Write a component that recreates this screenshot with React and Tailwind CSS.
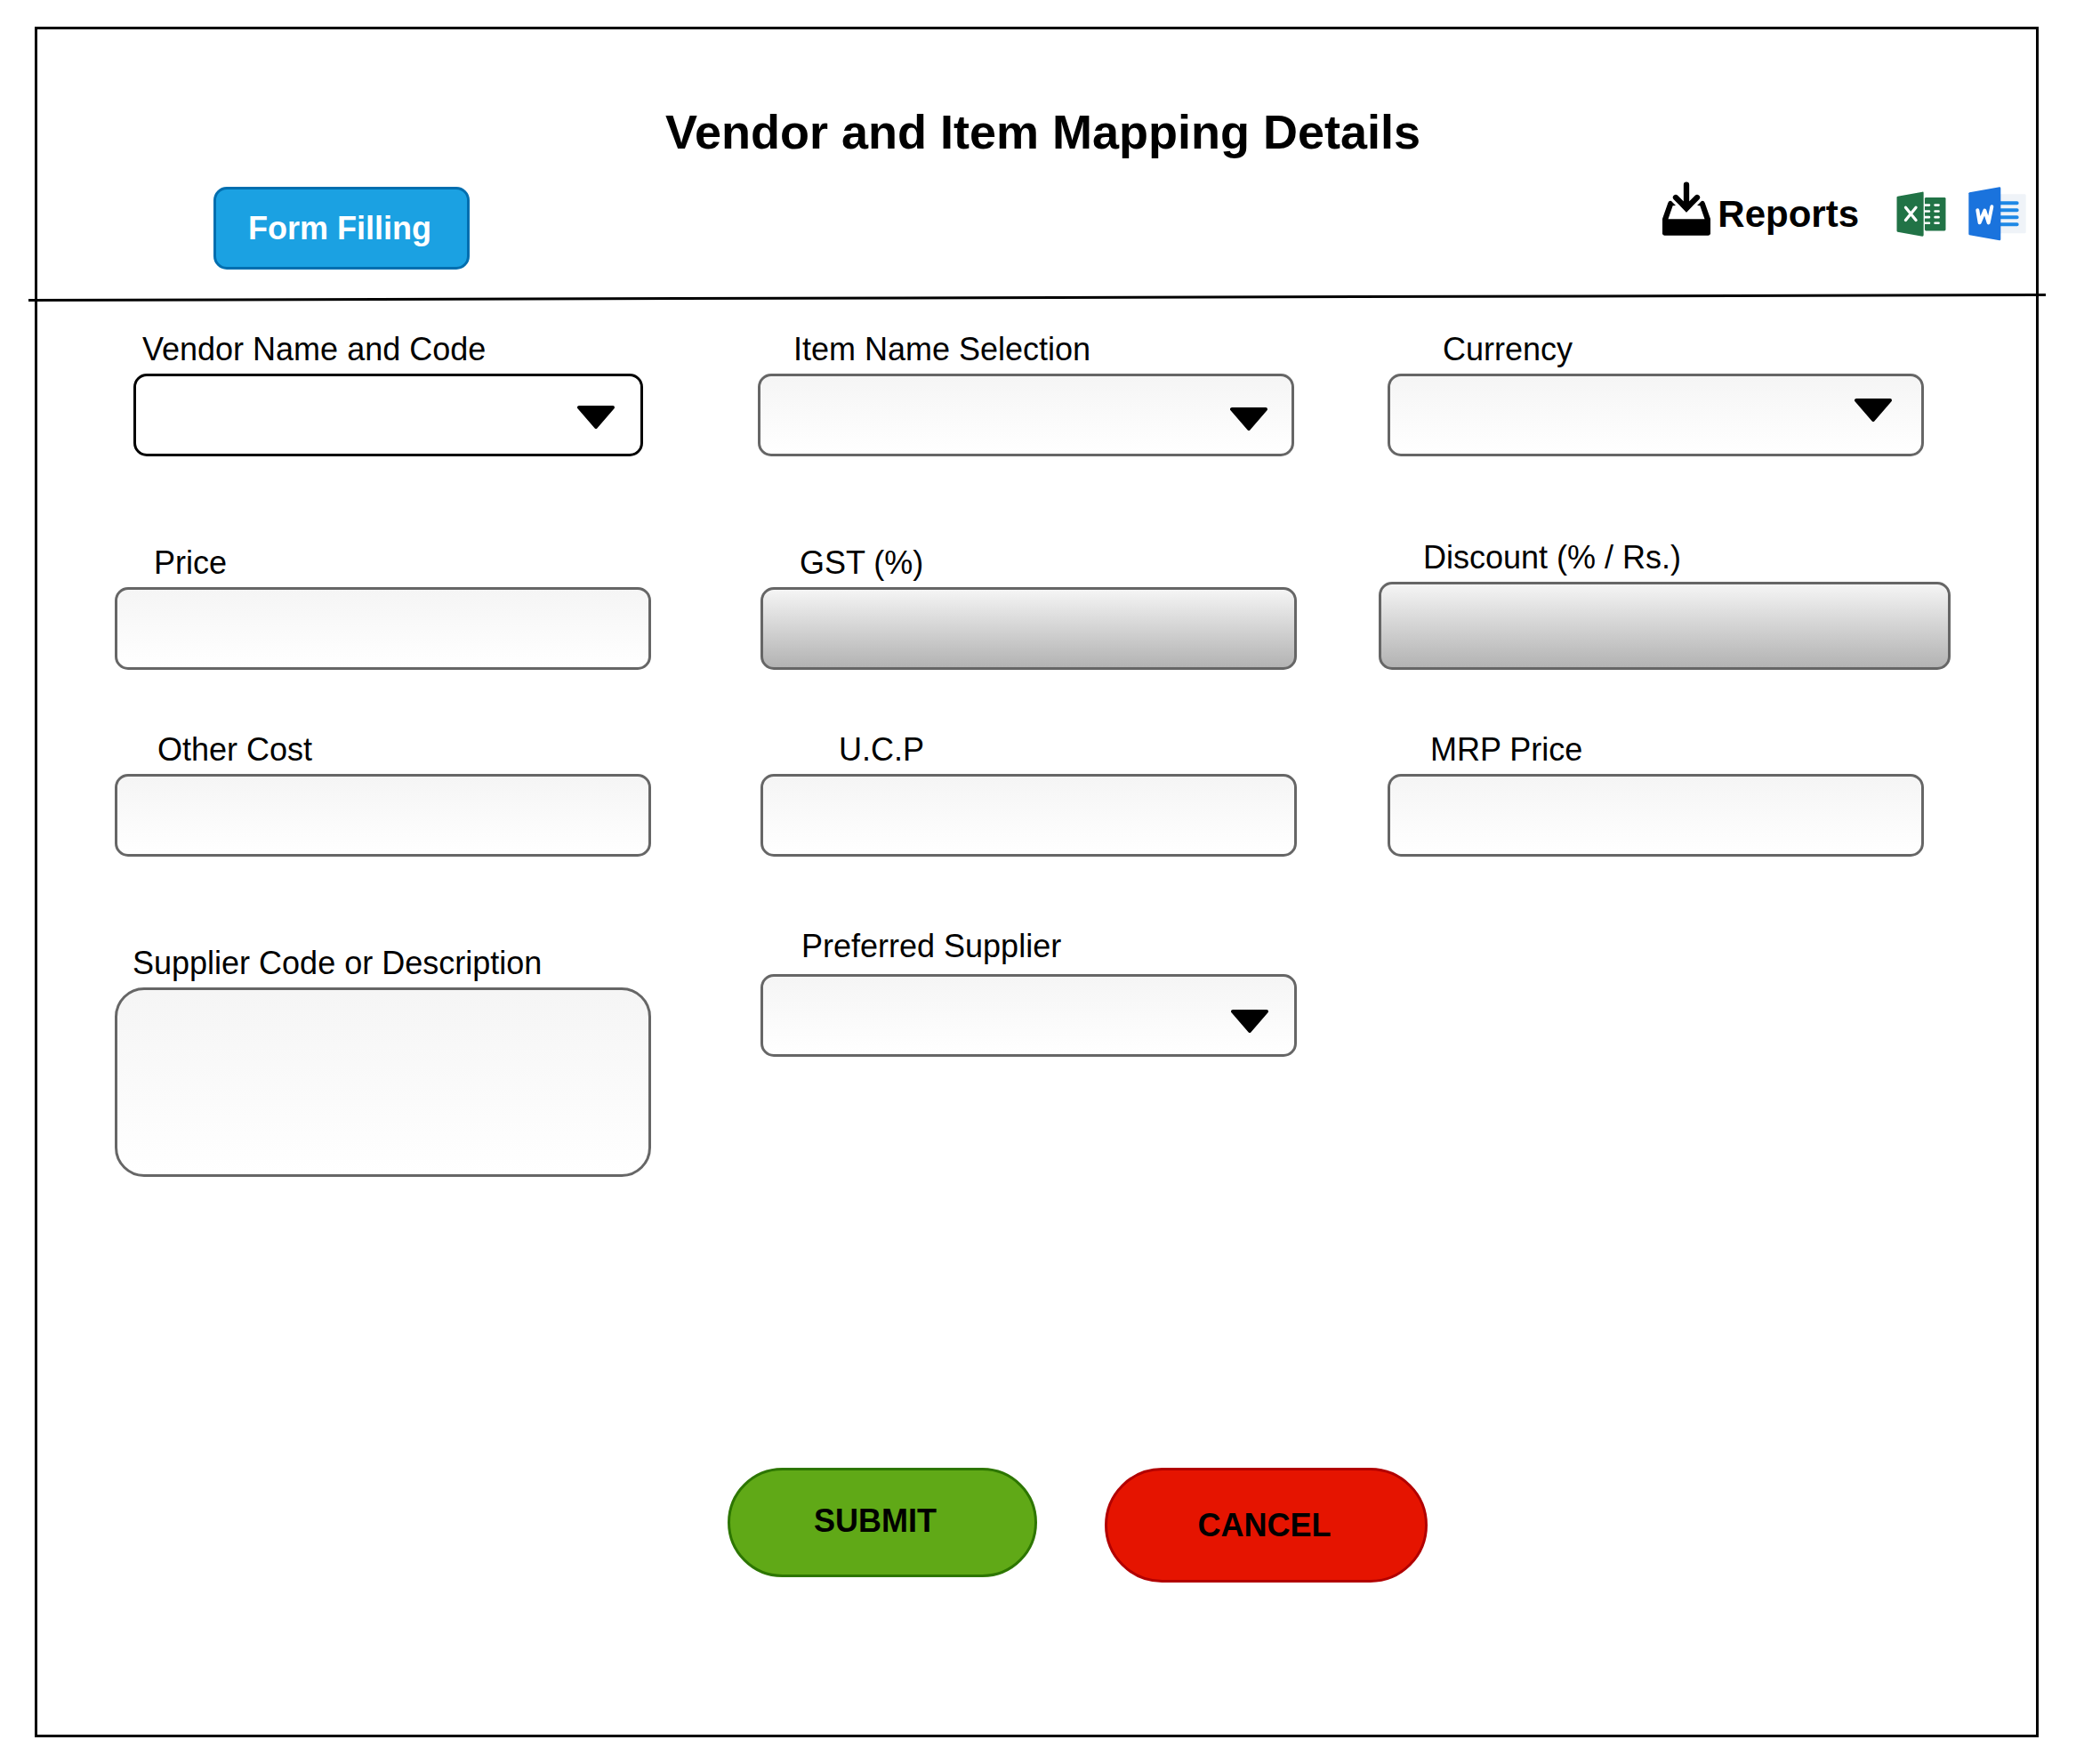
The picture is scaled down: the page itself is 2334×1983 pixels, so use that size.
import React from "react";

const LIGHT = "border-[#666666] bg-linear-to-b from-[#f5f5f5] to-white";
const SHADED = "border-[#666666] bg-linear-to-b from-[#f5f5f5] to-[#b3b3b3]";

function Label({ id, indent, gap = "mb-1.5", children }) {
  return (
    <label htmlFor={id} className={`block text-4xl leading-[42px] ${gap} ${indent}`}>
      {children}
    </label>
  );
}

function TextField({ id, label, indent, cell, tone = LIGHT, height = "h-[93px]" }) {
  return (
    <div className={cell}>
      <Label id={id} indent={indent}>{label}</Label>
      <input
        id={id}
        type="text"
        className={`block w-full rounded-[15px] border-3 px-6 text-4xl ${height} ${tone}`}
      />
    </div>
  );
}

function SelectField({ id, label, indent, cell, arrow, gap, tone = LIGHT }) {
  return (
    <div className={cell}>
      <Label id={id} indent={indent} gap={gap}>{label}</Label>
      <div className="relative">
        <select
          id={id}
          className={`block h-[93px] w-full appearance-none rounded-[15px] border-3 px-6 text-4xl ${tone}`}
        />
        <svg
          viewBox="0 0 42 26"
          className={`pointer-events-none absolute h-[26px] w-[42px] ${arrow}`}
          aria-hidden="true"
        >
          <path d="M2 2H40L21 24Z" stroke="#000" strokeWidth="4" strokeLinejoin="round" />
        </svg>
      </div>
    </div>
  );
}

function DownloadIcon() {
  return (
    <svg viewBox="0 0 162 183" className="mb-3 h-[61px] w-[54px]" aria-hidden="true">
      <rect x="0" y="127" width="162" height="55" rx="7" />
      <path d="M0 134V126L19 72Q22 64 30 66L45 81L35 82L19 128V134Z" />
      <path d="M162 134V126L143 72Q140 64 132 66L117 81L127 82L143 128V134Z" />
      <path
        d="M81 11V88M45 54L81 90L117 54"
        fill="none"
        stroke="#000"
        strokeWidth="19"
        strokeLinecap="round"
      />
      <path d="M60 82H102L81 104Z" />
    </svg>
  );
}

function ExcelIcon() {
  return (
    <svg viewBox="0 0 168 154" className="h-[51px] w-14" aria-hidden="true">
      <rect x="96" y="21" width="71" height="113" rx="4" fill="#217346" />
      <path
        d="M96 47H111M96 68H111M96 88H111M96 108H111M131 47H143M131 68H143M131 88H143M131 108H143"
        stroke="#fff"
        strokeWidth="8"
        strokeLinecap="round"
      />
      <path d="M4 17L88 2Q92 1 92 5V149Q92 153 88 153L4 138Q1 137 1 134V20Q1 18 4 17Z" fill="#217346" />
      <path d="M31 55L66 98M66 55L31 98" stroke="#fff" strokeWidth="10" strokeLinecap="round" />
    </svg>
  );
}

function WordIcon() {
  return (
    <svg viewBox="0 0 195 183" className="h-[61px] w-[65px]" aria-hidden="true">
      <rect x="105" y="25" width="89" height="132" rx="4" fill="#eff3f8" />
      <path
        d="M105 55H164M105 79H164M105 103H164M105 127H164"
        stroke="#1e88e5"
        strokeWidth="12"
        strokeLinecap="round"
      />
      <path d="M4 19L105 1Q109 1 109 5V177Q109 181 105 181L4 163Q1 162 1 159V22Q1 20 4 19Z" fill="#1a73dd" />
      <path
        d="M31 79L38 121L55 80L68 121L79 67"
        fill="none"
        stroke="#fff"
        strokeWidth="12"
        strokeLinecap="round"
        strokeLinejoin="round"
      />
    </svg>
  );
}

export default function App() {
  return (
    <div className="flex min-h-screen flex-col bg-white pt-[30px] pr-[42px] pb-[30px] pl-[39px] font-['Liberation_Sans',Arial,sans-serif] text-black">
      <main className="flex-1 border-3 border-black">
        <header>
          <h1 className="pt-[85px] pl-3.5 text-center text-[54px] leading-[60px] font-bold">
            Vendor and Item Mapping Details
          </h1>
          <div className="mt-[26px] flex items-start justify-between pr-[11px] pl-[198px]">
            <button
              type="button"
              className="mt-1.5 h-[93px] w-72 rounded-[15px] border-3 border-[#006eaf] bg-[#1ba1e2] pr-1 text-4xl leading-10 font-bold text-white"
            >
              Form Filling
            </button>
            <div className="flex items-center">
              <button type="button" className="flex items-center gap-2 text-[42px] leading-12 font-bold">
                <DownloadIcon />
                Reports
              </button>
              <button type="button" aria-label="Export to Excel" className="ml-[42px]">
                <ExcelIcon />
              </button>
              <button type="button" aria-label="Export to Word" className="ml-[25px]">
                <WordIcon />
              </button>
            </div>
          </div>
          {/* Slightly tilted rule that runs past both sides of the frame */}
          <svg
            viewBox="0 0 2268 9"
            preserveAspectRatio="none"
            className="mt-[27px] -ml-2.5 block h-[9px] w-[calc(100%+21px)] max-w-none"
            aria-hidden="true"
          >
            <path d="M0 7.5L2268 1.5" stroke="#000" strokeWidth="3" />
          </svg>
        </header>

        <form className="mt-[33px]" onSubmit={(e) => e.preventDefault()}>
          <div className="grid grid-cols-[723fr_698fr_643fr] items-end pr-24 pl-[87px]">
            <SelectField
              id="vendor"
              label="Vendor Name and Code"
              indent="pl-2.5"
              cell="pl-[21px] pr-[129px]"
              arrow="top-9 right-8"
              tone="border-black bg-white"
            />
            <SelectField
              id="item"
              label="Item Name Selection"
              indent="pl-10"
              cell="pr-[95px]"
              arrow="top-9.5 right-7.5"
            />
            <SelectField
              id="currency"
              label="Currency"
              indent="pl-15.5"
              cell="pl-2.5 pr-[30px]"
              arrow="top-7 right-9"
            />

            <TextField id="price" label="Price" indent="pl-11" cell="mt-[93px] pr-[120px]" />
            <TextField id="gst" label="GST (%)" indent="pl-11" cell="pl-[3px] pr-[92px]" tone={SHADED} />
            <TextField
              id="discount"
              label="Discount (% / Rs.)"
              indent="pl-12.5"
              cell="mt-[93px]"
              tone={SHADED}
              height="h-[99px]"
            />

            <TextField id="other-cost" label="Other Cost" indent="pl-12" cell="mt-[69px] pr-[120px]" />
            <TextField id="ucp" label="U.C.P" indent="pl-22" cell="pl-[3px] pr-[92px]" />
            <TextField id="mrp" label="MRP Price" indent="pl-12" cell="pl-2.5 pr-[30px]" />

            <div className="mt-[99px] pr-[120px]">
              <Label id="description" indent="pl-5">Supplier Code or Description</Label>
              <textarea
                id="description"
                className={`block h-[213px] w-full resize-none rounded-[33px] border-3 p-6 text-4xl ${LIGHT}`}
              />
            </div>
            <SelectField
              id="preferred"
              label="Preferred Supplier"
              indent="pl-11.5"
              gap="mb-2.5"
              cell="mt-20 self-start pl-[3px] pr-[92px]"
              arrow="top-10 right-8"
            />
          </div>

          <div className="mt-[327px] mb-20 flex items-start justify-center gap-19 pl-[92px]">
            <button
              type="submit"
              className="h-[123px] w-[348px] rounded-full border-3 border-[#2d7600] bg-[#60a917] pr-4 pb-1 text-4xl leading-10 font-bold"
            >
              SUBMIT
            </button>
            <button
              type="button"
              className="h-[129px] w-[363px] rounded-full border-3 border-[#b20000] bg-[#e51400] pr-1 text-4xl leading-10 font-bold"
            >
              CANCEL
            </button>
          </div>
        </form>
      </main>
    </div>
  );
}
